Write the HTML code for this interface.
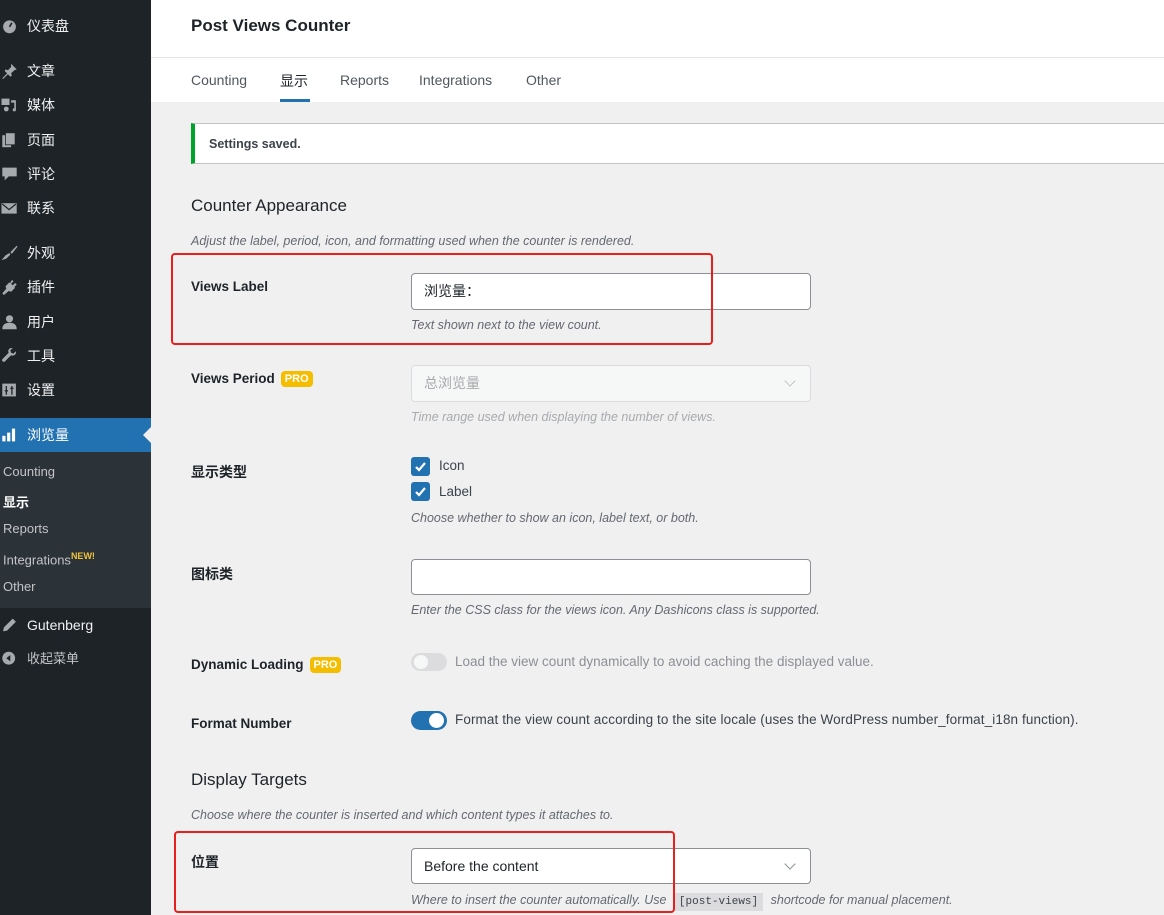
<!DOCTYPE html>
<html><head><meta charset="utf-8">
<style>
*{box-sizing:border-box;margin:0;padding:0}
body{width:1164px;height:915px;overflow:hidden;background:#f0f0f1;font-family:"Liberation Sans","Noto Sans CJK SC",sans-serif;color:#1d2327;position:relative;font-size:13px}
.abs{position:absolute;white-space:nowrap}
#side{position:absolute;left:0;top:0;width:151px;height:915px;background:#1d2327}
.mi{position:absolute;left:0;width:151px;height:34px;color:#f0f0f1;font-size:14px;line-height:34px}
.mi .ic{position:absolute;left:1px;top:9px;width:17px;height:16px;color:#a7aaad}
.mi span.t{position:absolute;left:27px}
.sub{position:absolute;left:3px;color:#c3c4c7;font-size:13px}
.lbl{position:absolute;left:191px;font-size:14px;font-weight:bold;color:#1d2327}
.help{position:absolute;left:411px;font-size:12.5px;font-style:italic;color:#646970;white-space:nowrap}
.inp{position:absolute;left:411px;width:400px;height:37px;background:#fff;border:1px solid #8c8f94;border-radius:4px;font-size:14px;line-height:35px;padding-left:12px}
.pro{display:inline-block;background:#f5bd00;color:#fff;font-size:11px;font-weight:bold;border-radius:4px;padding:2px 4px;margin-left:6px;vertical-align:1px}
.cb{position:absolute;left:411px;width:19px;height:19px;background:#2271b1;border-radius:3px}
.h2{position:absolute;left:191px;font-size:17px;color:#1d2327}
.red{position:absolute;border:2px solid #e8201c;border-radius:4px}
.chev{position:absolute;right:16px;top:11px;width:8px;height:8px;border-right:1.5px solid #8c8f94;border-bottom:1.5px solid #8c8f94;transform:rotate(45deg)}
</style></head><body>
<div id="side">
 <div class="mi" style="top:9px"><svg class="ic" viewBox="0 0 20 20"><circle cx="10" cy="11" r="8" fill="#a7aaad"/><path d="M10 11l3-5" stroke="#1d2327" stroke-width="2"/></svg><span class="t">仪表盘</span></div>
 <div class="mi" style="top:54px"><svg class="ic" viewBox="0 0 20 20"><path d="M12 1l7 7-3 1-4 4 1 3-2 1-3-3-6 6-1-1 6-6-3-3 1-2 3 1 4-4z" fill="#a7aaad"/></svg><span class="t">文章</span></div>
 <div class="mi" style="top:88px"><svg class="ic" viewBox="0 0 20 20"><rect x="0" y="2" width="10" height="8" fill="#a7aaad"/><path d="M12 4h6v12a2 2 0 1 1-2-2V7h-4z" fill="#a7aaad"/><circle cx="6" cy="15" r="3" fill="#a7aaad"/></svg><span class="t">媒体</span></div>
 <div class="mi" style="top:123px"><svg class="ic" viewBox="0 0 20 20"><rect x="1" y="4" width="11" height="15" fill="#a7aaad"/><rect x="5" y="1" width="12" height="15" fill="#a7aaad" stroke="#1d2327"/></svg><span class="t">页面</span></div>
 <div class="mi" style="top:157px"><svg class="ic" viewBox="0 0 20 20"><path d="M1 2h18v11H9l-5 5v-5H1z" fill="#a7aaad"/></svg><span class="t">评论</span></div>
 <div class="mi" style="top:191px"><svg class="ic" viewBox="0 0 20 20"><rect x="0" y="4" width="19" height="13" fill="#a7aaad"/><path d="M1 5l8.5 7L18 5" stroke="#1d2327" stroke-width="1.5" fill="none"/></svg><span class="t">联系</span></div>
 <div class="mi" style="top:236px"><svg class="ic" viewBox="0 0 20 20"><path d="M19 1l-8 8 2 2 7-9zM10 10l-5 3-5 6 6-2 5-5z" fill="#a7aaad"/></svg><span class="t">外观</span></div>
 <div class="mi" style="top:270px"><svg class="ic" viewBox="0 0 20 20"><path d="M13 1l2 2-3 3 2 2 3-3 2 2-3 3 1 1-5 5-3-1-6 5-2-2 5-6-1-3 5-5 1 1z" fill="#a7aaad"/></svg><span class="t">插件</span></div>
 <div class="mi" style="top:305px"><svg class="ic" viewBox="0 0 20 20"><circle cx="10" cy="6" r="4.5" fill="#a7aaad"/><path d="M1 19c0-6 4-8 9-8s9 2 9 8z" fill="#a7aaad"/></svg><span class="t">用户</span></div>
 <div class="mi" style="top:339px"><svg class="ic" viewBox="0 0 20 20"><path d="M18 4l-3 3-3-1-1-3 3-3c-3-1-7 2-5 6L1 14c-1 2 1 4 3 3l8-8c4 2 7-2 6-5z" fill="#a7aaad"/></svg><span class="t">工具</span></div>
 <div class="mi" style="top:373px"><svg class="ic" viewBox="0 0 20 20"><rect x="1" y="2" width="17" height="16" fill="#a7aaad"/><path d="M6 5v11M13 5v11M4 11h4M11 8h4" stroke="#1d2327" stroke-width="1.6"/></svg><span class="t">设置</span></div>
 <div class="mi" style="top:418px;background:#2271b1;color:#fff"><svg class="ic" viewBox="0 0 20 20"><rect x="1" y="11" width="4" height="7" fill="#fff"/><rect x="7" y="7" width="4" height="11" fill="#fff"/><rect x="13" y="2" width="4" height="16" fill="#fff"/></svg><span class="t">浏览量</span><div style="position:absolute;right:0;top:9px;border:8px solid transparent;border-right-color:#f0f0f1"></div></div>
 <div style="position:absolute;top:452px;left:0;width:151px;height:156px;background:#2c3338"></div>
 <div class="sub" style="top:464px">Counting</div>
 <div class="sub" style="top:492px;color:#fff;font-weight:bold">显示</div>
 <div class="sub" style="top:521px">Reports</div>
 <div class="sub" style="top:551px">Integrations<sup style="color:#f0c33c;font-size:9px;font-weight:bold">NEW!</sup></div>
 <div class="sub" style="top:579px">Other</div>
 <div class="mi" style="top:608px"><svg class="ic" viewBox="0 0 20 20"><path d="M14 2l4 4-11 11-5 1 1-5z" fill="#a7aaad"/></svg><span class="t">Gutenberg</span></div>
 <div class="mi" style="top:642px;color:#c3c4c7;font-size:13px"><svg class="ic" viewBox="0 0 20 20"><circle cx="9" cy="9" r="8" fill="#a7aaad"/><path d="M11 5l-5 4 5 4z" fill="#1d2327"/></svg><span class="t">收起菜单</span></div>
</div>

<div style="position:absolute;left:151px;top:0;width:1013px;height:102px;background:#fff"></div>
<div style="position:absolute;left:151px;top:57px;width:1013px;height:1px;background:#e5e5e5"></div>
<div class="abs" style="left:191px;top:16px;font-size:17px;font-weight:bold;color:#1d2327">Post Views Counter</div>
<div class="abs" style="left:191px;top:72px;font-size:14px;color:#50575e">Counting</div>
<div class="abs" style="left:280px;top:71px;font-size:14px;color:#1d2327">显示</div>
<div style="position:absolute;left:280px;top:99px;width:30px;height:3px;background:#2271b1"></div>
<div class="abs" style="left:340px;top:72px;font-size:14px;color:#50575e">Reports</div>
<div class="abs" style="left:419px;top:72px;font-size:14px;color:#50575e">Integrations</div>
<div class="abs" style="left:526px;top:72px;font-size:14px;color:#50575e">Other</div>

<div style="position:absolute;left:191px;top:123px;width:980px;height:41px;background:#fff;border:1px solid #c3c4c7;border-left:4px solid #00a32a"></div>
<div class="abs" style="left:209px;top:137px;font-size:12.5px;font-weight:bold;color:#3c434a">Settings saved.</div>

<div class="h2" style="top:196px">Counter Appearance</div>
<div class="help" style="left:191px;top:234px">Adjust the label, period, icon, and formatting used when the counter is rendered.</div>

<div class="lbl" style="top:279px;font-size:13.5px">Views Label</div>
<div class="inp" style="top:273px">浏览量：</div>
<div class="help" style="top:318px">Text shown next to the view count.</div>
<div class="red" style="left:171px;top:253px;width:542px;height:92px"></div>

<div class="lbl" style="top:371px;font-size:13.5px">Views Period<span class="pro">PRO</span></div>
<div class="inp" style="top:365px;background:#f6f7f7;border-color:#dcdcde;color:#a7aaad">总浏览量<div class="chev" style="border-color:#c3c4c7"></div></div>
<div class="help" style="top:410px;color:#a7aaad">Time range used when displaying the number of views.</div>

<div class="lbl" style="top:462px">显示类型</div>
<div class="cb" style="top:457px"><svg width="19" height="19" viewBox="0 0 19 19"><path d="M5 10l3 3 6-7" stroke="#fff" stroke-width="2.2" fill="none"/></svg></div>
<div class="abs" style="left:439px;top:458px;font-size:13.5px;color:#3c434a">Icon</div>
<div class="cb" style="top:482px"><svg width="19" height="19" viewBox="0 0 19 19"><path d="M5 10l3 3 6-7" stroke="#fff" stroke-width="2.2" fill="none"/></svg></div>
<div class="abs" style="left:439px;top:484px;font-size:13.5px;color:#3c434a">Label</div>
<div class="help" style="top:511px">Choose whether to show an icon, label text, or both.</div>

<div class="lbl" style="top:564px">图标类</div>
<div class="inp" style="top:559px;height:36px"></div>
<div class="help" style="top:603px">Enter the CSS class for the views icon. Any Dashicons class is supported.</div>

<div class="lbl" style="top:657px;font-size:13.5px">Dynamic Loading<span class="pro">PRO</span></div>
<div style="position:absolute;left:411px;top:653px;width:36px;height:18px;border-radius:9px;background:#dcdcde"><div style="position:absolute;left:3px;top:2px;width:14px;height:14px;border-radius:7px;background:#f6f7f7"></div></div>
<div class="abs" style="left:455px;top:654px;font-size:13.5px;color:#8c8f94">Load the view count dynamically to avoid caching the displayed value.</div>

<div class="lbl" style="top:716px;font-size:13.5px">Format Number</div>
<div style="position:absolute;left:411px;top:711px;width:36px;height:19px;border-radius:10px;background:#2271b1"><div style="position:absolute;right:3px;top:2px;width:15px;height:15px;border-radius:8px;background:#fff"></div></div>
<div class="abs" style="left:455px;top:712px;font-size:13.5px;color:#3c434a;letter-spacing:0.1px">Format the view count according to the site locale (uses the WordPress number_format_i18n function).</div>

<div class="h2" style="top:770px">Display Targets</div>
<div class="help" style="left:191px;top:808px">Choose where the counter is inserted and which content types it attaches to.</div>

<div class="lbl" style="top:852px">位置</div>
<div class="inp" style="top:848px;height:36px">Before the content<div class="chev"></div></div>
<div class="help" style="top:893px">Where to insert the counter automatically. Use <span style="font-style:normal;font-family:'Liberation Mono',monospace;font-size:11px;background:#dcdcde;color:#3c434a;padding:3px 5px;margin:0 4px">[post-views]</span> shortcode for manual placement.</div>
<div class="red" style="left:174px;top:831px;width:501px;height:82px"></div>
</body></html>
